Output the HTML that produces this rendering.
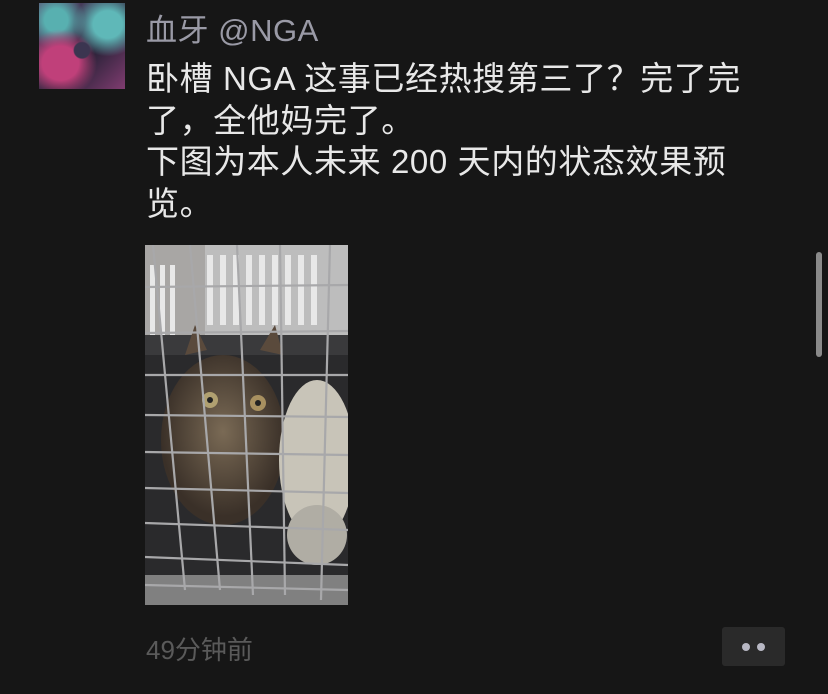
<!DOCTYPE html>
<html><head><meta charset="utf-8"><style>
html,body{margin:0;padding:0;width:828px;height:694px;background:#161616;overflow:hidden;font-family:"Liberation Sans","Noto Sans CJK SC",sans-serif;}
.av{position:absolute;left:39px;top:3px;width:86px;height:86px;background:
radial-gradient(circle at 50% 55%,#3b3550 0 12%,transparent 14%),
radial-gradient(ellipse at 25% 70%,#c0407a 0 20%,transparent 40%),
radial-gradient(ellipse at 80% 25%,#5fb8b8 0 15%,transparent 35%),
radial-gradient(ellipse at 20% 20%,#58b0b0 0 12%,transparent 30%),
linear-gradient(135deg,#5a4a70,#2a2238 60%,#803c70);}
.name{position:absolute;left:146px;top:5px;font-size:31px;color:#9a9aa6;white-space:nowrap;letter-spacing:0.5px;}
.txt{position:absolute;left:146px;top:58px;font-size:33px;line-height:41.5px;color:#e8e8e8;white-space:nowrap;letter-spacing:0.6px;}
.img{position:absolute;left:145px;top:245px;width:203px;height:360px;}
.time{position:absolute;left:146px;top:630px;font-size:26px;color:#5a5a5a;white-space:nowrap;}
.btn{position:absolute;left:722px;top:627px;width:63px;height:39px;background:#2a2a2a;border-radius:3px;}
.dot{position:absolute;top:16px;width:8px;height:8px;border-radius:50%;background:#b8b8c4;}
.sb{position:absolute;left:816px;top:252px;width:6px;height:105px;border-radius:3px;background:#8a8a8a;}
</style></head><body>
<div class="av"></div>
<div class="name">血牙 @NGA</div>
<div class="txt">卧槽 NGA 这事已经热搜第三了？完了完<br>了，全他妈完了。<br>下图为本人未来 200 天内的状态效果预<br>览。</div>
<svg class="img" viewBox="0 0 203 360">
<defs>
<radialGradient id="cat" cx="0.5" cy="0.45" r="0.5"><stop offset="0" stop-color="#7a6a55"/><stop offset="1" stop-color="#3a3028"/></radialGradient>
</defs>
<rect width="203" height="360" fill="#2a2a2c"/>
<rect width="203" height="95" fill="#a8a6a4"/>
<rect x="60" y="0" width="143" height="90" fill="#bdbdbd"/>
<g fill="#e8e8e8">
<rect x="62" y="10" width="6" height="70"/><rect x="75" y="10" width="6" height="70"/><rect x="88" y="10" width="6" height="70"/><rect x="101" y="10" width="6" height="70"/><rect x="114" y="10" width="6" height="70"/><rect x="127" y="10" width="6" height="70"/><rect x="140" y="10" width="6" height="70"/><rect x="153" y="10" width="6" height="70"/><rect x="166" y="10" width="6" height="70"/>
<rect x="5" y="20" width="5" height="80"/><rect x="15" y="20" width="5" height="80"/><rect x="25" y="20" width="5" height="80"/>
</g>
<rect x="0" y="90" width="203" height="20" fill="#3a3a3c"/>
<ellipse cx="78" cy="195" rx="62" ry="85" fill="url(#cat)"/>
<path d="M40 110 L50 80 L62 105 Z M115 105 L130 80 L138 110 Z" fill="#5a4a3c"/>
<ellipse cx="172" cy="215" rx="38" ry="80" fill="#c8c4b8"/>
<ellipse cx="172" cy="290" rx="30" ry="30" fill="#b0ada4"/>
<circle cx="65" cy="155" r="8" fill="#b0a070"/><circle cx="113" cy="158" r="8" fill="#a89060"/>
<circle cx="65" cy="155" r="3" fill="#222"/><circle cx="113" cy="158" r="3" fill="#222"/>
<rect x="0" y="330" width="203" height="30" fill="#808080"/>
<g stroke="#a8a8aa" stroke-width="2.2" fill="none">
<line x1="0" y1="42" x2="203" y2="40"/><line x1="0" y1="88" x2="203" y2="86"/><line x1="0" y1="130" x2="203" y2="130"/><line x1="0" y1="170" x2="203" y2="172"/><line x1="0" y1="207" x2="203" y2="210"/><line x1="0" y1="243" x2="203" y2="248"/><line x1="0" y1="278" x2="203" y2="285"/><line x1="0" y1="312" x2="203" y2="320"/><line x1="0" y1="340" x2="203" y2="345"/>
<line x1="8" y1="0" x2="40" y2="345"/><line x1="45" y1="0" x2="75" y2="345"/><line x1="92" y1="0" x2="108" y2="350"/><line x1="135" y1="0" x2="140" y2="350"/><line x1="185" y1="0" x2="176" y2="355"/>
</g>
</svg>
<div class="time">49分钟前</div>
<div class="btn"><div class="dot" style="left:20px"></div><div class="dot" style="left:35px"></div></div>
<div class="sb"></div>
</body></html>
